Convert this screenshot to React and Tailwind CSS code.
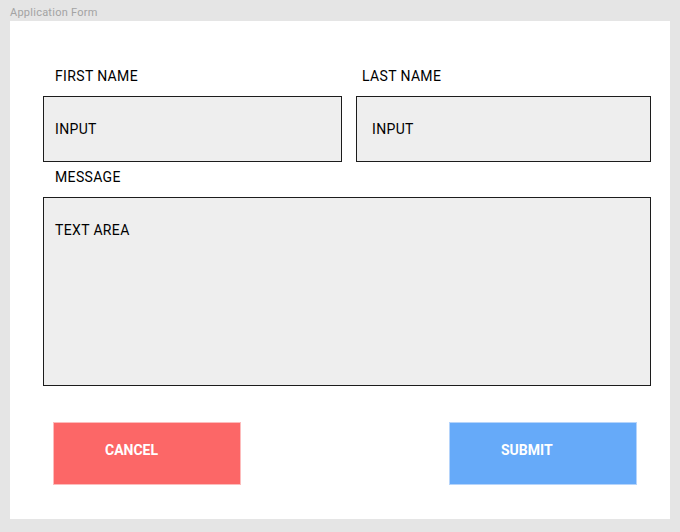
export default function App() {
  return (
    <div className="w-[680px] h-[532px] bg-[#e5e5e5] font-['Roboto',_'Liberation_Sans',_sans-serif] text-black">
      <div className="h-[21px] pl-[10px] pt-[6px] text-[11px] leading-[14px] tracking-[0.25px] text-[#a3a3a3]">Application Form</div>
      <div className="ml-[10px] w-[660px] h-[498px] bg-white pt-[45px] pl-[33px] text-[14px] tracking-[0.35px]">
        <div className="flex gap-[14px]">
          <div className="w-[299px]">
            <div className="h-[20px] pl-[12px] leading-[20px]">FIRST NAME</div>
            <div className="mt-[10px] h-[66px] border border-[#1c1c1c] bg-[#eeeeee] flex items-center pl-[11px]">INPUT</div>
          </div>
          <div className="w-[295px]">
            <div className="h-[20px] pl-[6px] leading-[20px]">LAST NAME</div>
            <div className="mt-[10px] h-[66px] border border-[#1c1c1c] bg-[#eeeeee] flex items-center pl-[15px]">INPUT</div>
          </div>
        </div>
        <div className="mt-[5px] h-[20px] pl-[12px] leading-[20px]">MESSAGE</div>
        <div className="mt-[10px] w-[608px] h-[189px] border border-[#1c1c1c] bg-[#eeeeee] pl-[11px] pt-[22px] leading-[20px]">TEXT AREA</div>
        <div className="mt-[36px] flex pl-[10px] tracking-normal">
          <button className="w-[188px] h-[63px] bg-[#fc6767] border border-[#fdbcbc] text-white font-bold flex items-center pb-[7px] pl-[51px] leading-[20px]">CANCEL</button>
          <button className="ml-[208px] w-[188px] h-[63px] bg-[#66aaf9] border border-[#b5d4fb] text-white font-bold flex items-center pb-[7px] pl-[51px] leading-[20px]">SUBMIT</button>
        </div>
      </div>
    </div>
  )
}
